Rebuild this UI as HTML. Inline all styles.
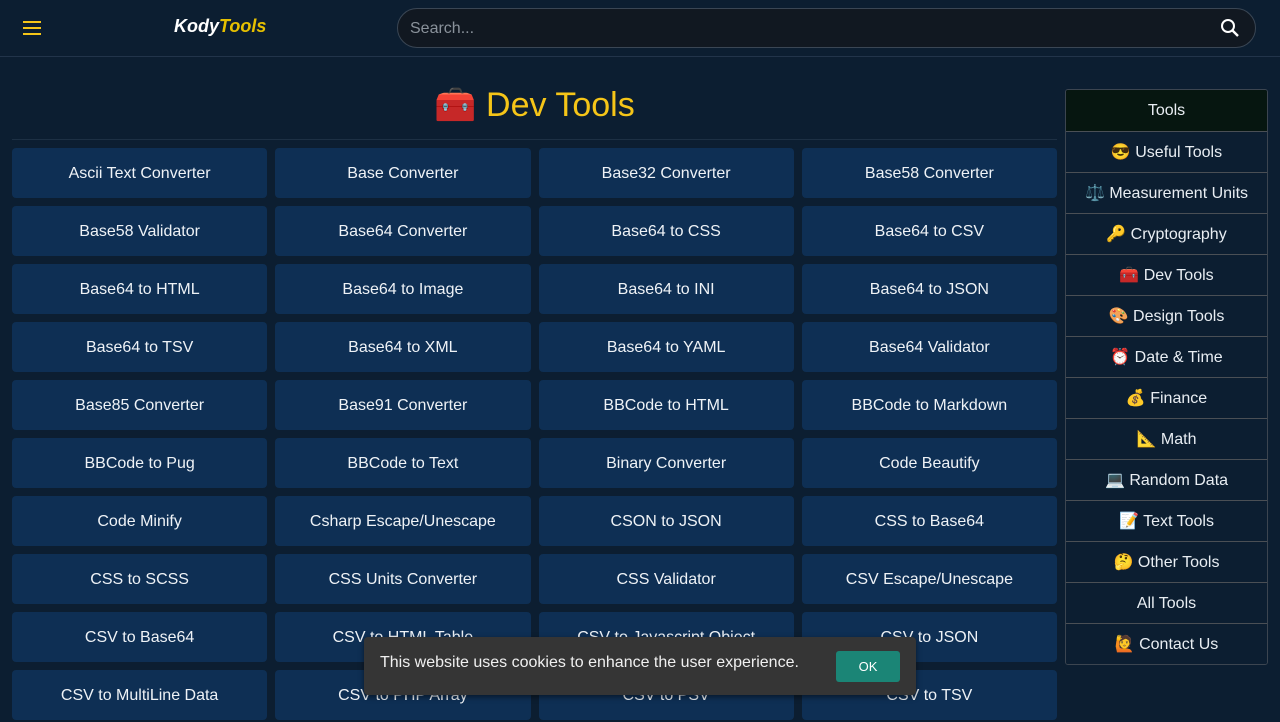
<!DOCTYPE html>
<html><head><meta charset="utf-8"><style>
*{box-sizing:border-box;margin:0;padding:0}
body{width:1280px;height:720px;overflow:hidden;background:#0c1e31;font-family:"Liberation Sans","Noto Sans CJK SC",sans-serif;color:#e8edf2;position:relative}
.hdr{position:absolute;left:0;top:0;width:1280px;height:57px;border-bottom:1px solid #22344a;background:#0c1e31}
.ham{position:absolute;left:23px;top:21px;width:18px}
.ham i{display:block;height:2px;background:#f5c518;margin-bottom:4px}
.logo{position:absolute;left:174px;top:16px;font-size:18px;font-weight:bold;font-style:italic;color:#fff}
.logo span{color:#e6c000}
.search{position:absolute;left:397px;top:8px;width:859px;height:40px;border:1px solid #3a4654;border-radius:20px;background:#111821;color:#8a929b;font-size:16px;padding:11px 12px}
.title{position:absolute;left:12px;width:1045px;top:85px;text-align:center;font-size:34px;color:#f5c518}
.line{position:absolute;left:12px;width:1045px;top:139px;border-top:1px solid #1d3044}
.grid{position:absolute;left:12px;top:148px;display:grid;grid-template-columns:repeat(4,255.25px);column-gap:8px;row-gap:8px}
.grid div{height:50px;background:#0e2f54;border-radius:4px;text-align:center;line-height:52px;font-size:16px;color:#eef2f6}
.side{position:absolute;left:1065px;top:89px;width:203px;border:1px solid #3c4550;border-radius:3px;overflow:hidden}
.side div{height:41px;border-top:1px solid #4a4f55;text-align:center;line-height:41px;font-size:16px;background:#0c1e31}
.side div:first-child{border-top:none;height:41px;background:#061610}
.ck{position:absolute;left:364px;top:637px;width:552px;height:58px;background:#353535;border-radius:4px;box-shadow:0 2px 6px rgba(0,0,0,.5)}
.ck p{position:absolute;left:16px;top:17px;font-size:16px;color:#f0f0f0}
.ck b{position:absolute;left:472px;top:14px;width:64px;height:31px;background:#1b8576;border-radius:3px;font-weight:normal;font-size:13px;text-align:center;line-height:31px;color:#fff}
</style></head><body>
<div class="hdr">
<div class="ham"><i></i><i></i><i></i></div>
<div class="logo">Kody<span>Tools</span></div>
<div class="search">Search...</div>
<svg style="position:absolute;left:1220px;top:18px" width="20" height="20" viewBox="0 0 20 20"><circle cx="8" cy="8" r="6" fill="none" stroke="#fff" stroke-width="2"/><path d="M12.5 12.5L18 18" stroke="#fff" stroke-width="2.4"/></svg>
</div>
<div class="title">🧰 Dev Tools</div>
<div class="line"></div>
<div class="grid">
<div>Ascii Text Converter</div><div>Base Converter</div><div>Base32 Converter</div><div>Base58 Converter</div>
<div>Base58 Validator</div><div>Base64 Converter</div><div>Base64 to CSS</div><div>Base64 to CSV</div>
<div>Base64 to HTML</div><div>Base64 to Image</div><div>Base64 to INI</div><div>Base64 to JSON</div>
<div>Base64 to TSV</div><div>Base64 to XML</div><div>Base64 to YAML</div><div>Base64 Validator</div>
<div>Base85 Converter</div><div>Base91 Converter</div><div>BBCode to HTML</div><div>BBCode to Markdown</div>
<div>BBCode to Pug</div><div>BBCode to Text</div><div>Binary Converter</div><div>Code Beautify</div>
<div>Code Minify</div><div>Csharp Escape/Unescape</div><div>CSON to JSON</div><div>CSS to Base64</div>
<div>CSS to SCSS</div><div>CSS Units Converter</div><div>CSS Validator</div><div>CSV Escape/Unescape</div>
<div>CSV to Base64</div><div>CSV to HTML Table</div><div>CSV to Javascript Object</div><div>CSV to JSON</div>
<div>CSV to MultiLine Data</div><div>CSV to PHP Array</div><div>CSV to PSV</div><div>CSV to TSV</div>
</div>
<div class="side">
<div>Tools</div><div>😎 Useful Tools</div><div>⚖️ Measurement Units</div><div>🔑 Cryptography</div><div>🧰 Dev Tools</div><div>🎨 Design Tools</div><div>⏰ Date &amp; Time</div><div>💰 Finance</div><div>📐 Math</div><div>💻 Random Data</div><div>📝 Text Tools</div><div>🤔 Other Tools</div><div>All Tools</div><div>🙋 Contact Us</div>
</div>
<div class="ck"><p>This website uses cookies to enhance the user experience.</p><b>OK</b></div>
</body></html>
